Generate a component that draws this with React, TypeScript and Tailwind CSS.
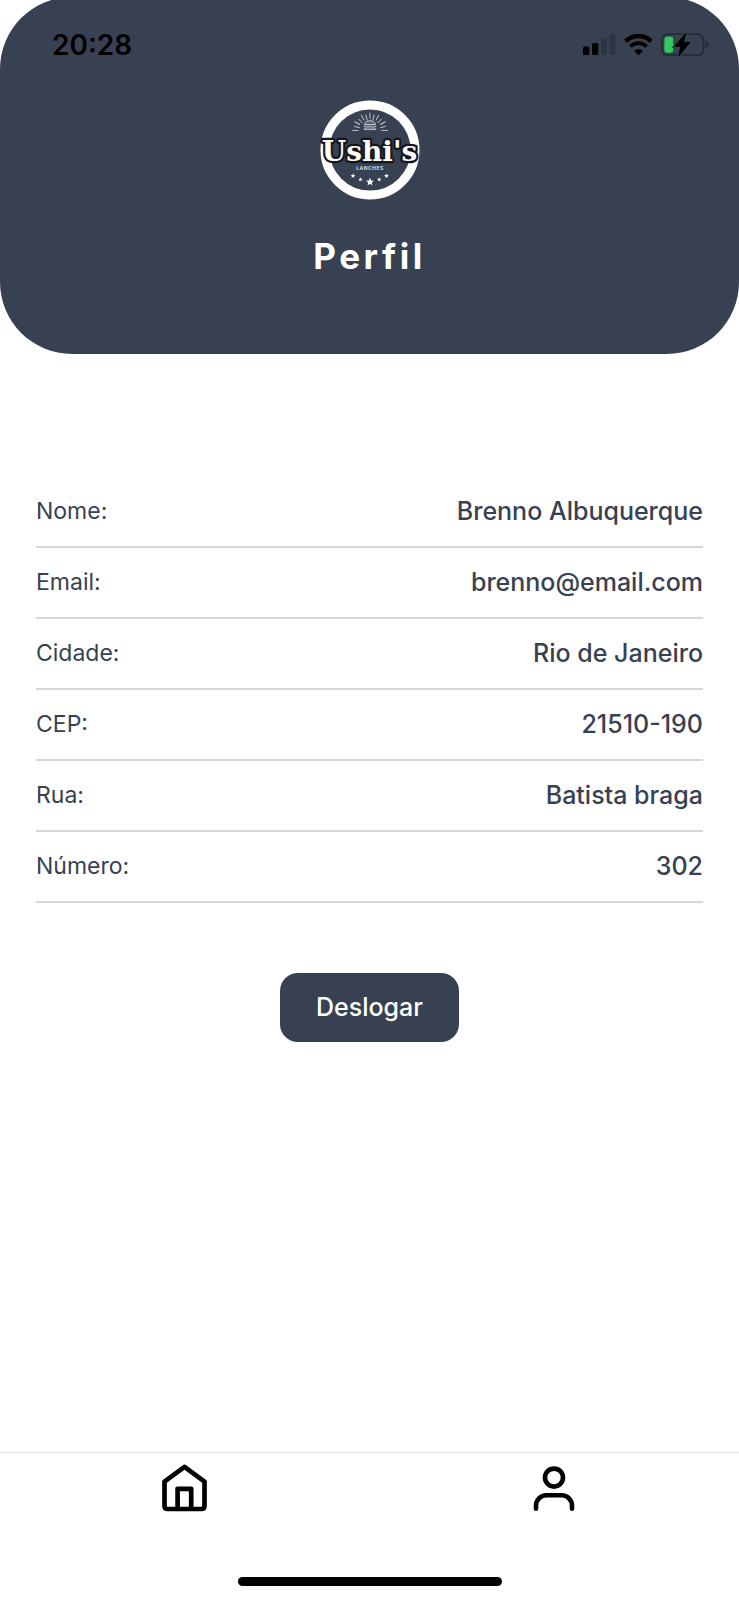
const fields = [
  { label: "Nome:", value: "Brenno Albuquerque" },
  { label: "Email:", value: "brenno@email.com" },
  { label: "Cidade:", value: "Rio de Janeiro" },
  { label: "CEP:", value: "21510-190" },
  { label: "Rua:", value: "Batista braga" },
  { label: "Número:", value: "302" },
];

function StatusBar() {
  return (
    <div className="flex h-8 w-full items-center justify-between pr-[30px] pl-[52px]">
      <span className="text-[28px] leading-8 font-semibold text-black">20:28</span>
      <div className="flex items-center gap-2">
        <svg width="33" height="22" viewBox="0 0 33 22" aria-hidden="true">
          <rect x="0" y="12.5" width="6.3" height="8.5" rx="1.6" fill="#000" />
          <rect x="9" y="9" width="6.3" height="12" rx="1.6" fill="#000" />
          <rect x="18" y="4.5" width="6" height="16.5" rx="1.6" fill="#2d3542" />
          <rect x="26.5" y="0" width="6" height="21" rx="1.6" fill="#2d3542" />
        </svg>
        <svg width="29" height="22" viewBox="0 0 29 22" aria-hidden="true">
          <path d="M1.8 7.3a18 18 0 0 1 25.4 0" fill="none" stroke="#000" strokeWidth="4.6" />
          <path d="M6.4 12.5a11.4 11.4 0 0 1 16.2 0" fill="none" stroke="#000" strokeWidth="3.9" />
          <path d="M14.5 21.3l-4.4-4.4a6.2 6.2 0 0 1 8.8 0z" fill="#000" />
        </svg>
        <svg width="48" height="24" viewBox="0 0 48 24" aria-hidden="true">
          <rect x="1" y="1.2" width="41.5" height="21" rx="5.5" fill="none" stroke="#252b36" strokeWidth="1.7" />
          <path d="M44.6 8c3.4 1.2 3.4 6.2 0 7.4z" fill="#252b36" />
          <rect x="3.4" y="3.7" width="8.8" height="16" rx="2.4" fill="#30cc5b" />
          <path
            d="M24.6 0.6L13.8 13.2H20L17.8 23L28.8 9.4H22.4z"
            fill="#384152"
            stroke="#384152"
            strokeWidth="3.4"
          />
          <path
            d="M24.6 0.6L13.8 13.2H20L17.8 23L28.8 9.4H22.4z"
            fill="#000"
            stroke="#000"
            strokeWidth="1"
            strokeLinejoin="round"
          />
        </svg>
      </div>
    </div>
  );
}

const rays = [-90, -75, -60, -45, -30, -15, 0, 15, 30, 45, 60, 75, 90];
const stars = [
  { x: 33, y: 75.8, s: 2.5 },
  { x: 40.5, y: 79.5, s: 2.3 },
  { x: 50, y: 82, s: 4.2 },
  { x: 59.2, y: 79.5, s: 2.3 },
  { x: 66.5, y: 75.8, s: 2.5 },
];

function Logo() {
  return (
    <svg width="100" height="100" viewBox="0 0 100 100" role="img" aria-label="Ushi's Lanches">
      <circle cx="50" cy="50" r="45" fill="#384152" stroke="#fff" strokeWidth="9" />
      <g stroke="#c9cdd5" strokeWidth="0.9" strokeLinecap="round">
        {rays.map((a, i) => (
          <line
            key={a}
            x1="50"
            y1={i % 2 ? 19.5 : 18.5}
            x2="50"
            y2={i % 2 ? 14.5 : 13}
            transform={`rotate(${a} 50 30.5)`}
          />
        ))}
      </g>
      <g fill="none" stroke="#c9cdd5" strokeWidth="0.9">
        <path d="M44.5 24.5c0-5 11-5 11 0z" fill="#5c6474" />
        <path d="M43.7 26.2h12.6" />
        <path d="M44.3 28h11.4v1.6H44.3z" />
      </g>
      <text
        x="49.5"
        y="61"
        textAnchor="middle"
        className="font-['DejaVu_Serif',serif] text-[28px] font-bold"
        fill="#fff"
        stroke="#15171c"
        strokeWidth="4.5"
        strokeLinejoin="round"
        paintOrder="stroke"
      >
        Ushi's
      </text>
      <text
        x="50"
        y="70"
        textAnchor="middle"
        className="text-[5px] font-semibold tracking-widest"
        fill="#e5e7eb"
      >
        LANCHES
      </text>
      {stars.map((s) => (
        <path
          key={s.x}
          transform={`translate(${s.x} ${s.y}) scale(${s.s})`}
          d="M0-1L.26-.34.95-.31.41.13.59.81 0 .43-.59.81-.41.13-.95-.31-.26-.34z"
          fill="#fff"
        />
      ))}
    </svg>
  );
}

export default function App() {
  return (
    <div className="flex min-h-screen flex-col bg-white font-['Inter','Liberation_Sans',sans-serif] text-[#384152]">
      <header className="-mt-[3px] flex flex-col items-center rounded-[72px] bg-[#384152] pt-8 pb-[74px]">
        <StatusBar />
        <div className="mt-[39px]">
          <Logo />
        </div>
        <h1 className="mt-8 text-[35px] leading-[48px] font-bold tracking-widest text-white">Perfil</h1>
      </header>

      <main className="flex flex-col items-center px-9 pt-[123px]">
        <dl className="w-full">
          {fields.map((f) => (
            <div
              key={f.label}
              className="flex h-[71px] items-center justify-between border-b-2 border-[#d5d7db]"
            >
              <dt className="text-[23px]">{f.label}</dt>
              <dd className="text-[25px] font-medium">{f.value}</dd>
            </div>
          ))}
        </dl>
        <button
          type="button"
          className="mt-[70px] rounded-[18px] bg-[#384152] px-9 py-4 text-[25px] leading-[37px] font-medium text-white"
        >
          Deslogar
        </button>
      </main>

      <nav className="mt-auto flex flex-col items-center border-t border-[#dedede]">
        <div className="flex w-full">
          <a href="#home" aria-label="Início" className="flex flex-1 justify-center pt-[11px]">
            <svg width="45" height="48" viewBox="0 0 45 48" fill="none" stroke="#000" strokeWidth="4.7" strokeLinejoin="round">
              <path d="M22.5 2.8L2.5 17.6V42q0 3 3 3H39.5q3 0 3-3V17.6z" />
              <path d="M15.6 45V24.8H29.2V45" />
            </svg>
          </a>
          <a href="#perfil" aria-label="Perfil" className="flex flex-1 justify-center pt-[11px]">
            <svg width="42" height="48" viewBox="0 0 42 48" fill="none" stroke="#000" strokeWidth="4.6" strokeLinecap="round">
              <circle cx="21" cy="13.6" r="9" />
              <path d="M3 44.8V41.6a10.3 10.3 0 0 1 10.3-10.3H28.7a10.3 10.3 0 0 1 10.3 10.3V44.8" />
            </svg>
          </a>
        </div>
        <div className="mt-[65px] mb-[14px] h-[9px] w-[264px] rounded-full bg-black" />
      </nav>
    </div>
  );
}
